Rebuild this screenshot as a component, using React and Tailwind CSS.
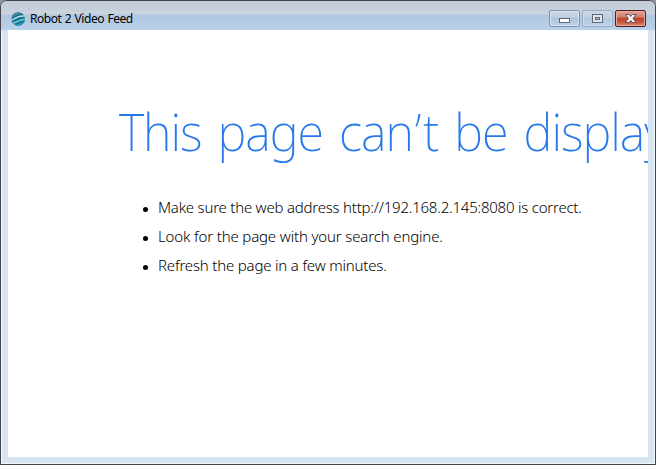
const tips = [
  { text: 'Make sure the web address http://192.168.2.145:8080 is correct.', spacing: 'tracking-[-0.22px]' },
  { text: 'Look for the page with your search engine.', spacing: 'tracking-[-0.15px]' },
  { text: 'Refresh the page in a few minutes.', spacing: 'tracking-[-0.18px]' },
];

function GlobeIcon() {
  return (
    <svg className="h-4 w-4 shrink-0" viewBox="0 0 16 16" fill="none">
      <circle cx="8.2" cy="8" r="6.8" fill="#1b6a86" />
      <path d="M2.2 5.5C4.2 1.8 8.6 .6 12.1 2.6C8.6 3 5.6 4.3 2.2 6.9Z" fill="#3d8fa6" />
      <path d="M1.4 9C5.6 8.3 7.1 4.2 14.3 5" stroke="#b9e2ea" strokeWidth="1.5" />
      <path d="M2.8 12C7.6 11.8 8.6 8.2 14.9 8.6" stroke="#4fc3d6" strokeWidth="2" />
      <path d="M6.2 14.2C9.6 14 10.6 11.9 13.8 11.4" stroke="#2aa3bd" strokeWidth="1.4" />
    </svg>
  );
}

function TitleBar() {
  return (
    <header className="flex h-[29px] shrink-0 justify-between bg-[linear-gradient(180deg,#c0ccd9_0px,#cad3de_13px,#b1c7df_14px,#b9d1ea_29px)] pr-[9px] pl-[9px]">
      <div className="flex items-center pt-[6px]">
        <GlobeIcon />
        <h1 className="ml-[4px] font-['Noto_Sans','Open_Sans',sans-serif] text-[12px] leading-4 tracking-[-0.45px] [word-spacing:0.7px] whitespace-nowrap text-black">
          Robot 2 Video Feed
        </h1>
      </div>
      <div className="flex gap-[2px] pt-[9px]">
        <button aria-label="Minimize" className="h-[17px] w-[31px] rounded-[2px] border border-[#7e92ad] bg-[linear-gradient(180deg,#c8d4e2_0%,#c4d1e0_40%,#adc3dc_50%,#bdd3e9_100%)] shadow-[inset_0_0_0_1px_#d7e3ef]">
          <svg className="h-[15px] w-[29px]" viewBox="0 0 29 15" shapeRendering="crispEdges">
            <rect x="9.5" y="7.5" width="10" height="4" rx="1" fill="#fff" stroke="#646775" />
          </svg>
        </button>
        <button aria-label="Maximize" className="h-[17px] w-[31px] rounded-[2px] border border-[#98aac2] bg-[linear-gradient(180deg,#c8d4e2_0%,#c4d1e0_40%,#b2c8df_50%,#bdd3e9_100%)] shadow-[inset_0_0_0_1px_#cddbea]">
          <svg className="h-[15px] w-[29px]" viewBox="0 0 29 15" shapeRendering="crispEdges">
            <rect x="9.5" y="3.5" width="10" height="8" rx="1" fill="#e0e5ec" stroke="#62677a" />
            <rect x="12.5" y="6.5" width="4" height="2" fill="#a9c0da" stroke="#62677a" />
          </svg>
        </button>
        <button aria-label="Close" className="h-[17px] w-[31px] rounded-[2px] border border-[#501c22] bg-[linear-gradient(180deg,#dfa394_0%,#d18170_40%,#bb4330_50%,#c8573a_75%,#dc8868_100%)] shadow-[inset_0_0_0_1px_#e5aa9a]">
          <svg className="h-[15px] w-[29px]" viewBox="0 0 29 15">
            <path d="M9.5 3.5H13L14.7 5.5L16.4 3.5H20L17 7.5L20 11.5H16.4L14.7 9.5L13 11.5H9.5L12.5 7.5Z" fill="#f7f7f9" stroke="#5b5668" />
          </svg>
        </button>
      </div>
    </header>
  );
}

export default function App() {
  return (
    <div className="h-[465px] w-[656px] overflow-hidden bg-[#96979a]">
      <div className="flex h-full flex-col overflow-hidden rounded-t-[7px] border border-[#454349] bg-[#d7e4f2] shadow-[inset_0_0_0_1px_#f0f6fb]">
        <TitleBar />
        <main className="mx-[7px] mb-[7px] min-h-0 flex-1 overflow-hidden bg-white pt-[66px] pl-[111px] font-['Noto_Sans','Open_Sans',sans-serif]">
          <h2 className="h-[70px] origin-left scale-x-[0.956] text-[51px] leading-[70px] font-[250] tracking-[-1.05px] [word-spacing:4.5px] whitespace-nowrap text-[#2778ec]">
            This page can<span className="ml-[2px] mr-[3px]">’</span>t be displayed
          </h2>
          <ul className="mt-[27px] text-[15px] font-light text-black">
            {tips.map((tip) => (
              <li key={tip.text} className="flex h-[29px] items-center whitespace-nowrap">
                <span className="mt-[4px] mr-[10px] ml-[24px] h-[5px] w-[5px] rounded-full bg-black" />
                <span className={tip.spacing}>{tip.text}</span>
              </li>
            ))}
          </ul>
        </main>
      </div>
    </div>
  );
}
